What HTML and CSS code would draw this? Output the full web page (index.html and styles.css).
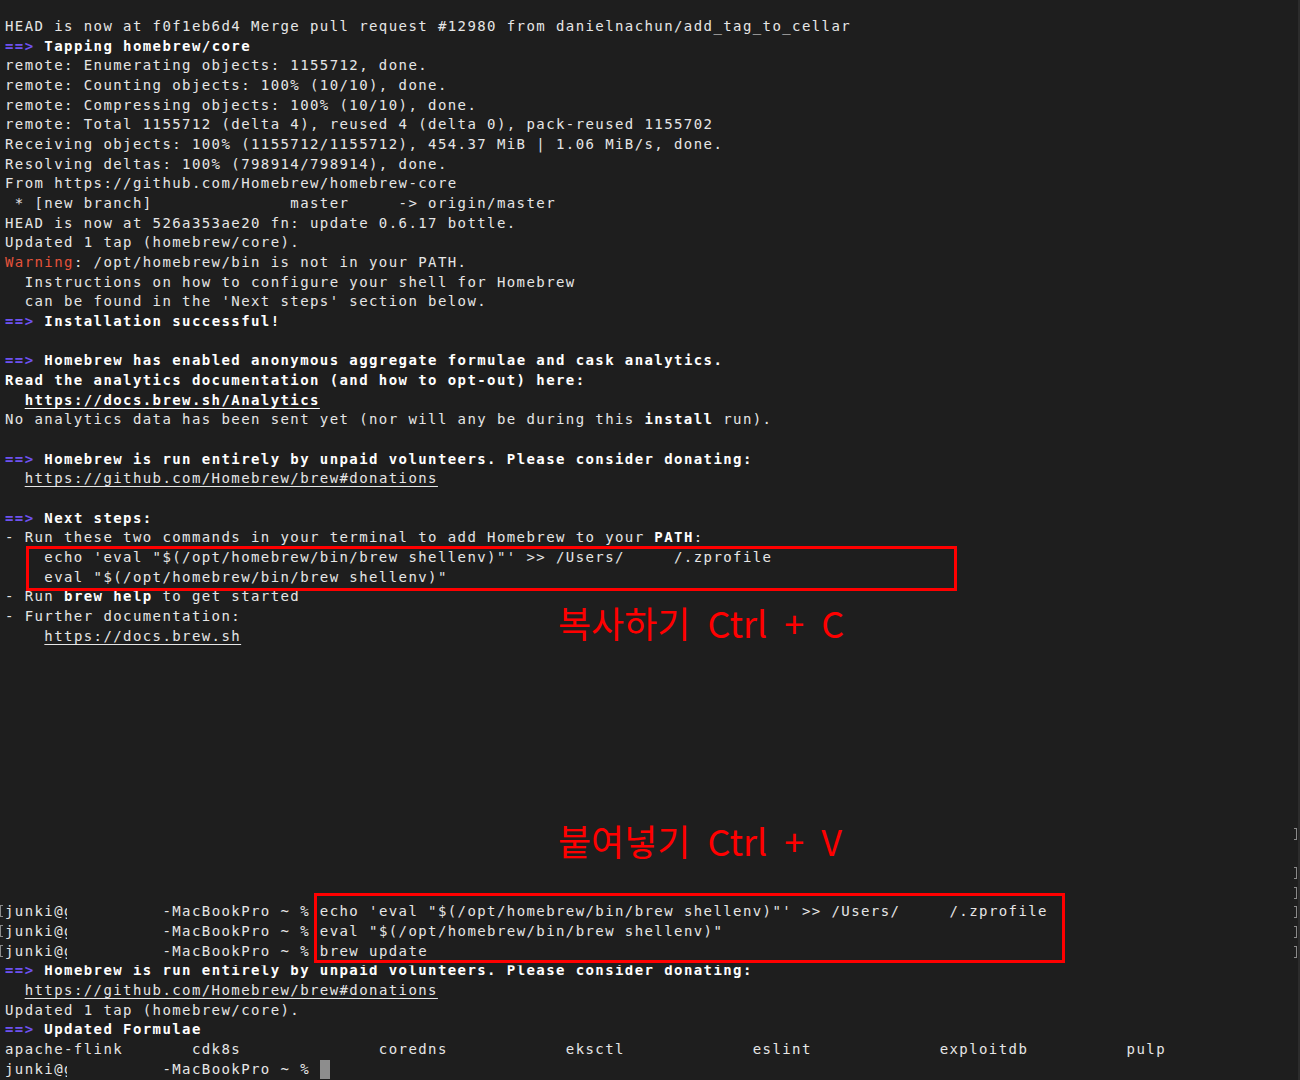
FILE: index.html
```html
<!DOCTYPE html>
<html lang="ko">
<head>
    <meta charset="UTF-8">
    <meta name="viewport" content="width=device-width, initial-scale=1.0">
    <title>Homebrew 설치 - 터미널</title>
    <link rel="stylesheet" href="styles.css">
</head>
<body>
    <div class="terminal">
        <div class="ln">HEAD is now at f0f1eb6d4 Merge pull request #12980 from danielnachun/add_tag_to_cellar</div>
        <div class="ln"><b><span class="arrow">==&gt;</span> Tapping homebrew/core</b></div>
        <div class="ln">remote: Enumerating objects: 1155712, done.</div>
        <div class="ln">remote: Counting objects: 100% (10/10), done.</div>
        <div class="ln">remote: Compressing objects: 100% (10/10), done.</div>
        <div class="ln">remote: Total 1155712 (delta 4), reused 4 (delta 0), pack-reused 1155702</div>
        <div class="ln">Receiving objects: 100% (1155712/1155712), 454.37 MiB | 1.06 MiB/s, done.</div>
        <div class="ln">Resolving deltas: 100% (798914/798914), done.</div>
        <div class="ln">From https://github.com/Homebrew/homebrew-core</div>
        <div class="ln"> * [new branch]              master     -&gt; origin/master</div>
        <div class="ln">HEAD is now at 526a353ae20 fn: update 0.6.17 bottle.</div>
        <div class="ln">Updated 1 tap (homebrew/core).</div>
        <div class="ln"><span class="warn">Warning</span>: /opt/homebrew/bin is not in your PATH.</div>
        <div class="ln">  Instructions on how to configure your shell for Homebrew</div>
        <div class="ln">  can be found in the 'Next steps' section below.</div>
        <div class="ln"><b><span class="arrow">==&gt;</span> Installation successful!</b></div>
        <div class="ln"></div>
        <div class="ln"><b><span class="arrow">==&gt;</span> Homebrew has enabled anonymous aggregate formulae and cask analytics.</b></div>
        <div class="ln"><b>Read the analytics documentation (and how to opt-out) here:</b></div>
        <div class="ln">  <b class="link">https://docs.brew.sh/Analytics</b></div>
        <div class="ln">No analytics data has been sent yet (nor will any be during this <b>install</b> run).</div>
        <div class="ln"></div>
        <div class="ln"><b><span class="arrow">==&gt;</span> Homebrew is run entirely by unpaid volunteers. Please consider donating:</b></div>
        <div class="ln">  <span class="link">https://github.com/Homebrew/brew#donations</span></div>
        <div class="ln"></div>
        <div class="ln"><b><span class="arrow">==&gt;</span> Next steps:</b></div>
        <div class="ln">- Run these two commands in your terminal to add Homebrew to your <b>PATH</b>:</div>
        <div class="ln">    echo 'eval "$(/opt/homebrew/bin/brew shellenv)"' &gt;&gt; /Users/     /.zprofile</div>
        <div class="ln">    eval "$(/opt/homebrew/bin/brew shellenv)"</div>
        <div class="ln">- Run <b>brew help</b> to get started</div>
        <div class="ln">- Further documentation:</div>
        <div class="ln">    <span class="link">https://docs.brew.sh</span></div>

        <div class="spacer"></div>
        <div class="ln"><span class="mark-r"></span></div>
        <div class="ln"></div>
        <div class="ln"><span class="mark-r"></span></div>
        <div class="ln"><span class="mark-r"></span></div>

        <div class="ln"><span class="mark-r"></span><span class="mark-l"></span>junki@<span class="host"><span class="peek">g</span></span>-MacBookPro ~ % echo 'eval "$(/opt/homebrew/bin/brew shellenv)"' &gt;&gt; /Users/     /.zprofile</div>
        <div class="ln"><span class="mark-r"></span><span class="mark-l"></span>junki@<span class="host"><span class="peek">g</span></span>-MacBookPro ~ % eval "$(/opt/homebrew/bin/brew shellenv)"</div>
        <div class="ln"><span class="mark-r"></span><span class="mark-l"></span>junki@<span class="host"><span class="peek">g</span></span>-MacBookPro ~ % brew update</div>
        <div class="ln clipped"><b><span class="arrow">==&gt;</span> Homebrew is run entirely by unpaid volunteers. Please consider donating:</b></div>
        <div class="ln">  <span class="link">https://github.com/Homebrew/brew#donations</span></div>
        <div class="ln">Updated 1 tap (homebrew/core).</div>
        <div class="ln"><b><span class="arrow">==&gt;</span> Updated Formulae</b></div>
        <div class="ln">apache-flink       cdk8s              coredns            eksctl             eslint             exploitdb          pulp</div>
        <div class="ln">junki@<span class="host"><span class="peek">g</span></span>-MacBookPro ~ % <span class="cursor"></span></div>

        <!-- annotations -->
        <div class="box box-copy"></div>
        <div class="box box-paste"></div>
        <div class="note note-copy">복사하기 Ctrl + C</div>
        <div class="note note-paste">붙여넣기 Ctrl + V</div>
    </div>
</body>
</html>
```

FILE: styles.css
```css
body {
    margin: 0;
    background-color: #1e1e1e;
    overflow: hidden;
}

.terminal {
    position: relative;
    height: 1080px;
    box-sizing: border-box;
    padding: 17px 0 0 5px;
    border-right: 2px solid #2c2c2c;
    font-family: "DejaVu Sans Mono", "Liberation Mono", monospace;
    font-size: 14px;
    letter-spacing: 1.41px;
    color: #e6e6e6;
}

.ln {
    height: 19.68px;
    line-height: 19.68px;
    white-space: pre;
}

.spacer {
    height: 177.12px; /* 9 empty rows */
}

b {
    font-weight: bold;
    color: #ffffff;
}

.arrow {
    color: #6e52f0;
}

.warn {
    color: #e5533b;
}

.link {
    text-decoration: underline;
    text-underline-offset: 3px;
    text-decoration-thickness: 1px;
}

.clipped {
    clip-path: inset(4px 0 0 0);
}

/* hidden host name, only a sliver of the first letter shows */
.host {
    display: inline-block;
    width: 98.4px;
    height: 19.68px;
    vertical-align: top;
    letter-spacing: 0;
}

.peek {
    display: inline-block;
    width: 3px;
    overflow: hidden;
    vertical-align: top;
}

.cursor {
    display: inline-block;
    width: 10px;
    height: 19px;
    background-color: #8d8d8d;
    vertical-align: top;
}

/* terminal line marks */
.mark-l {
    display: inline-block;
    box-sizing: border-box;
    width: 3px;
    height: 12px;
    margin: 0 2px 0 -5px;
    border: 1px solid #8a8a8a;
    border-right: none;
    vertical-align: -1px;
}

.mark-r {
    float: right;
    box-sizing: border-box;
    width: 3px;
    height: 12px;
    margin: 4px 1px 0 0;
    border: 1px solid #8a8a8a;
    border-left: none;
}

.box {
    position: absolute;
    box-sizing: border-box;
    border: 3px solid #ff0000;
}

.box-copy {
    left: 26px;
    top: 546px;
    width: 931px;
    height: 45px;
}

.box-paste {
    left: 314px;
    top: 893px;
    width: 751px;
    height: 70px;
}

.note {
    position: absolute;
    left: 558px;
    font-family: "Noto Sans CJK KR", sans-serif;
    font-size: 36px;
    line-height: 1;
    letter-spacing: 0;
    word-spacing: 7px;
    color: #ff0000;
    white-space: nowrap;
}

.note-copy {
    top: 604px;
}

.note-paste {
    top: 822px;
}
```
